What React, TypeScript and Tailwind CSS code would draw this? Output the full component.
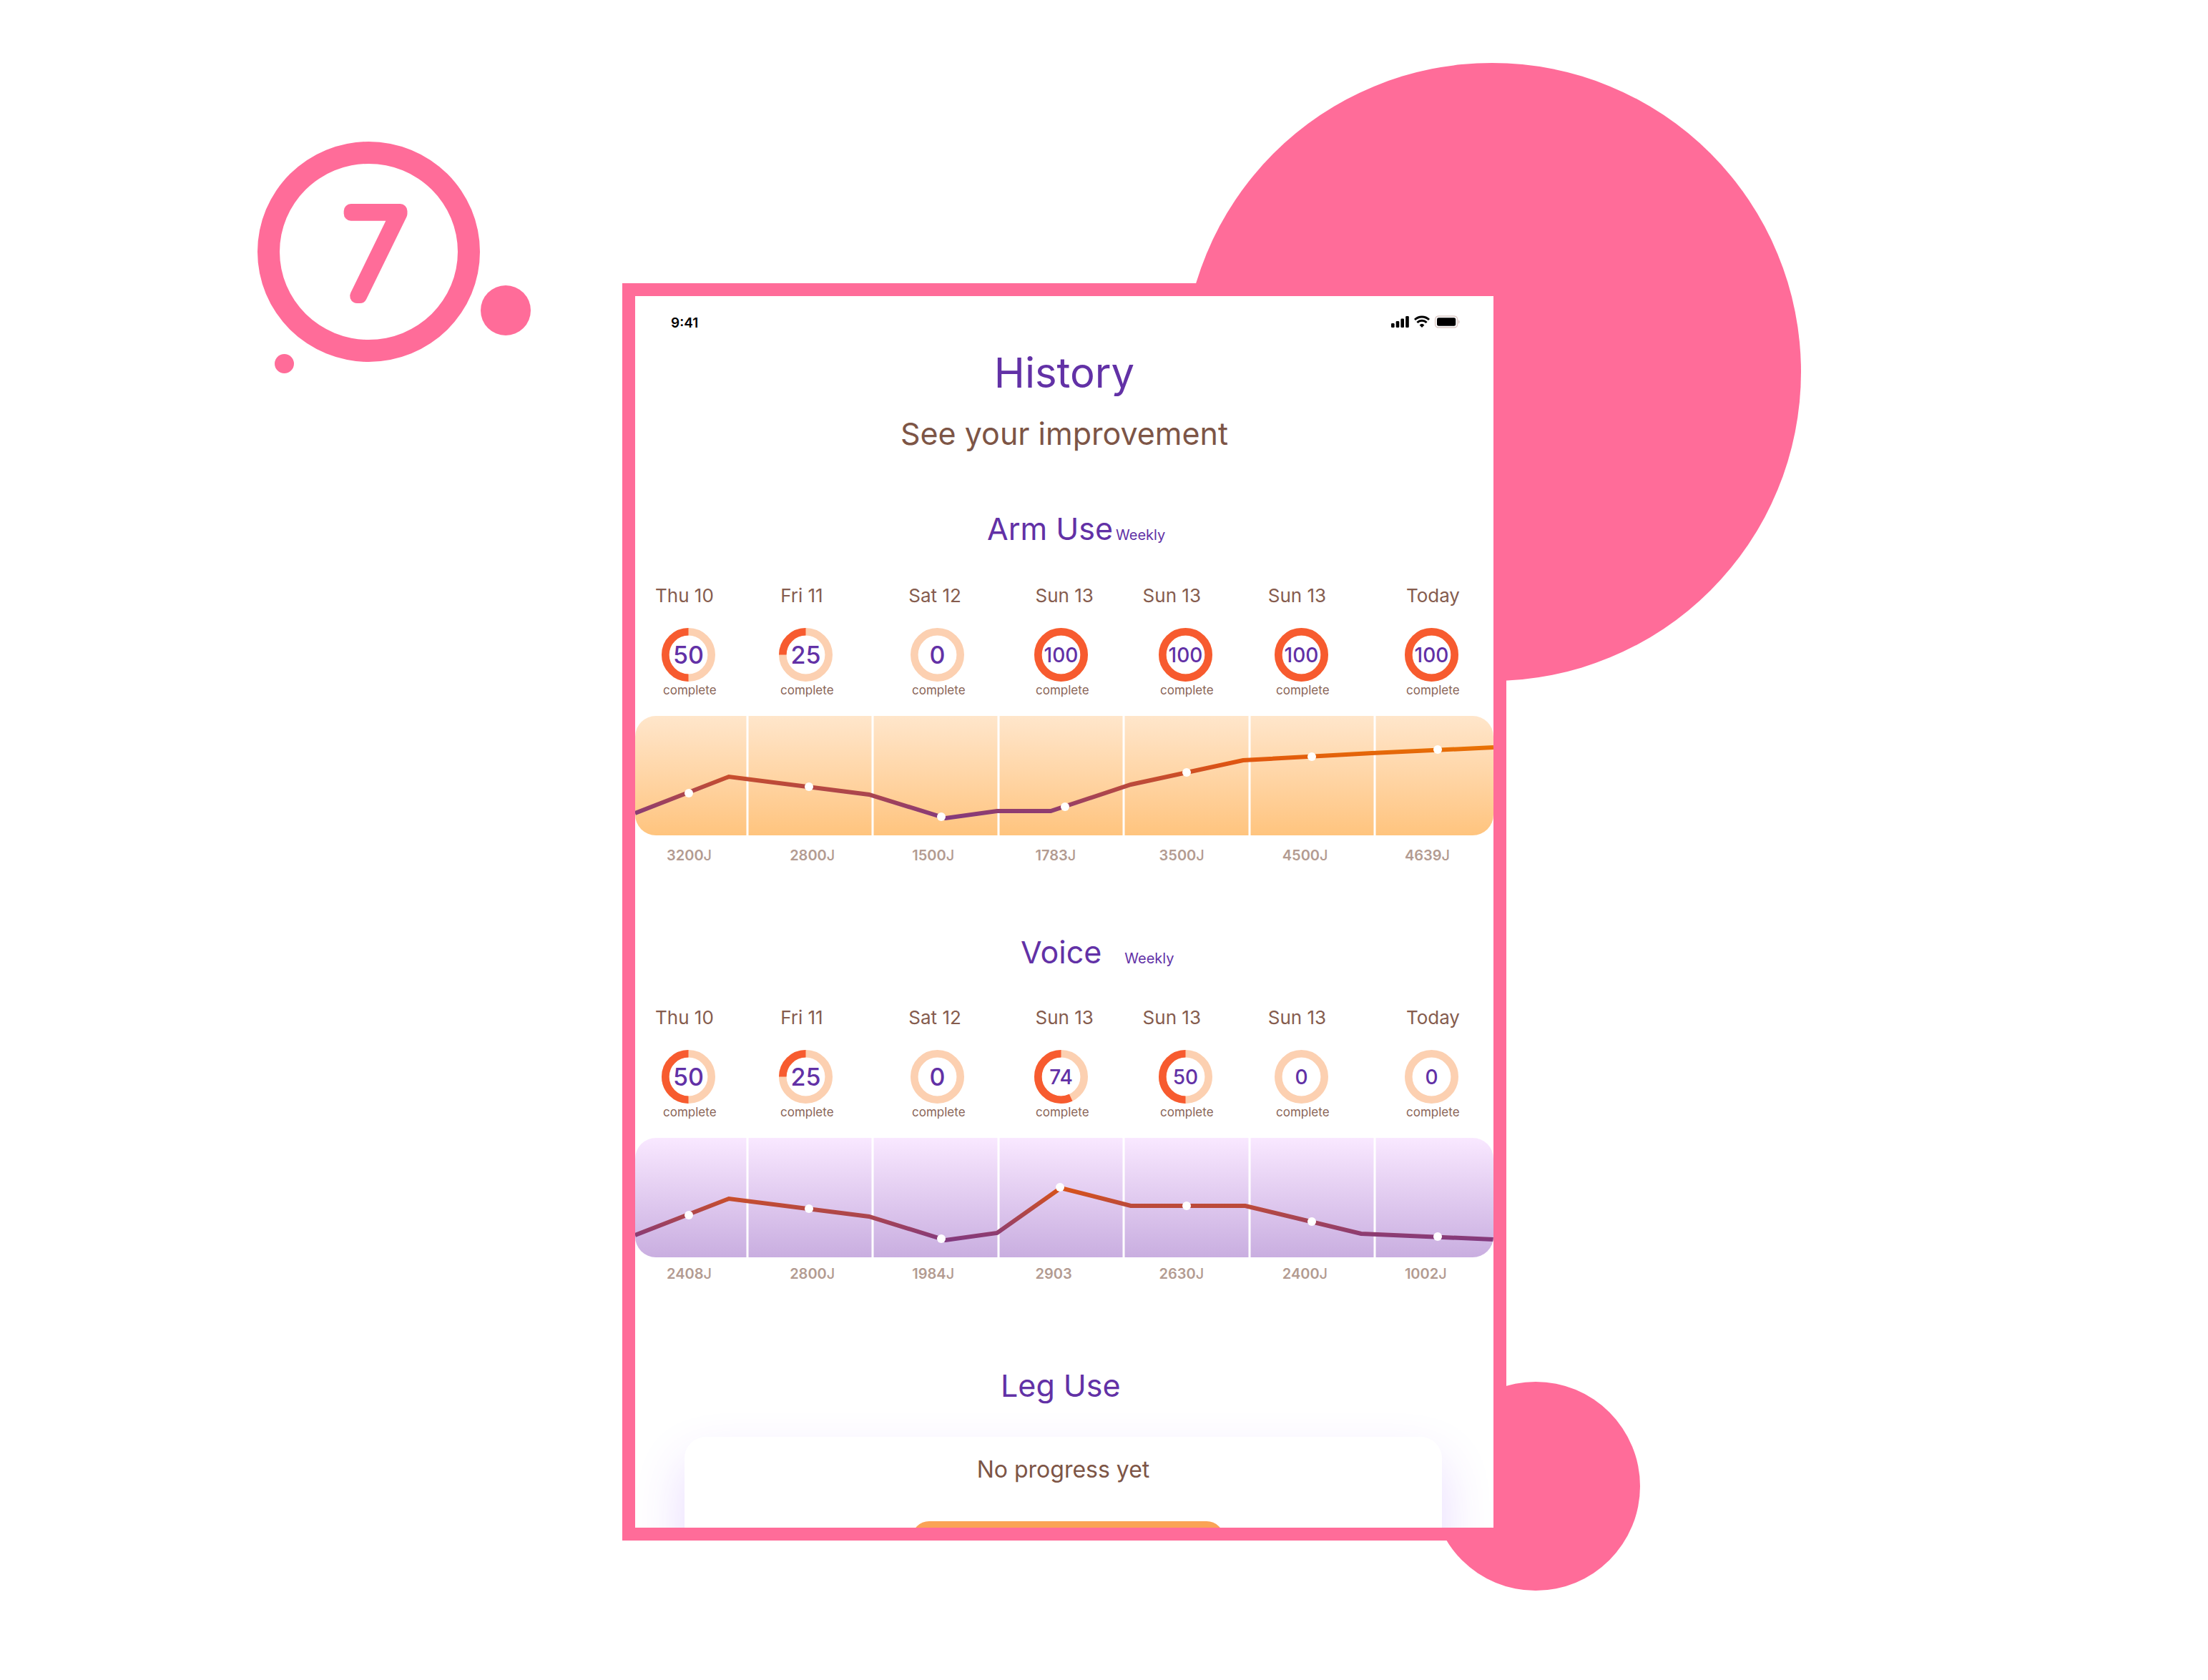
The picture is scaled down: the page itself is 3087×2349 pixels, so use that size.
const DAYS = ["Thu 10", "Fri 11", "Sat 12", "Sun 13", "Sun 13", "Sun 13", "Today"];

type Progress = { value: number; arc?: number };

type Series = {
  id: string;
  title: string;
  titleClass: string;
  progress: Progress[];
  line: string;
  dots: [number, number][];
  chartClass: string;
  energyClass: string;
  energy: string[];
};

const ARM: Series = {
  id: "arm",
  title: "Arm Use",
  titleClass: "mb-[46px] ml-[492px] gap-1",
  progress: [{ value: 50 }, { value: 25 }, { value: 0 }, { value: 100 }, { value: 100 }, { value: 100 }, { value: 100 }],
  line: "0,136 131,85 327,110 434,143 506,133 581,133 693,96 850,62 1030,52 1200,44",
  dots: [[75, 108], [243, 99], [428, 141], [601, 127], [771, 79], [946, 57], [1122, 47]],
  chartClass: "from-[#ffe6cb] to-[#ffc47e]",
  energyClass: "mt-[14px]",
  energy: ["3200J", "2800J", "1500J", "1783J", "3500J", "4500J", "4639J"],
};

const VOICE: Series = {
  id: "voice",
  title: "Voice",
  titleClass: "mb-[44px] ml-[539px] gap-8",
  progress: [{ value: 50 }, { value: 25 }, { value: 0 }, { value: 74, arc: 57 }, { value: 50 }, { value: 0 }, { value: 0 }],
  line: "0,136 131,85 327,110 434,143 506,133 595,70 693,95 853,95 1015,134 1200,142",
  dots: [[75, 108], [243, 99], [428, 141], [594, 69], [771, 95], [946, 117], [1122, 138]],
  chartClass: "from-[#f9e8ff] to-[#c9aee0]",
  energyClass: "mt-[9px]",
  energy: ["2408J", "2800J", "1984J", "2903", "2630J", "2400J", "1002J"],
};

function Ring({ value, arc = value, small }: Progress & { small: boolean }) {
  return (
    <div className="w-[75px]">
      <div className="grid h-[75px] place-items-center">
        <svg viewBox="0 0 75 75" className="col-start-1 row-start-1 size-full" aria-hidden="true">
          <circle cx="37.5" cy="37.5" r="32.2" fill="none" stroke="#fcd0b1" strokeWidth="10.6" />
          <circle
            cx="37.5"
            cy="37.5"
            r="32.2"
            fill="none"
            stroke="#f75b2f"
            strokeWidth="10.6"
            pathLength="100"
            strokeDasharray={`${arc} 100`}
            transform="matrix(0 -1 -1 0 75 75)"
          />
        </svg>
        <span className={`col-start-1 row-start-1 font-medium text-[#6231a6] ${small ? "text-[28px]" : "text-[34px]"}`}>
          {value}
        </span>
      </div>
      <div className="pl-0.5 text-center text-[17px] leading-6 text-[#8a6558]">complete</div>
    </div>
  );
}

function Chart({ series }: { series: Series }) {
  return (
    <div className={`h-[167px] overflow-hidden rounded-[29px] bg-linear-to-b ${series.chartClass}`}>
      <svg viewBox="0 0 1200 167" preserveAspectRatio="none" className="size-full" role="img" aria-label={`${series.title} weekly chart`}>
        <defs>
          <linearGradient id={`${series.id}-line`} gradientUnits="userSpaceOnUse" x1="0" y1="44" x2="0" y2="144">
            <stop offset="0" stopColor="#e87205" />
            <stop offset="0.2" stopColor="#e05510" />
            <stop offset="1" stopColor="#82397f" />
          </linearGradient>
        </defs>
        {[157, 332, 508, 683, 859, 1034].map((x) => (
          <line key={x} x1={x} y1="0" x2={x} y2="167" stroke="#fff" strokeWidth="3" />
        ))}
        <polyline points={series.line} fill="none" stroke={`url(#${series.id}-line)`} strokeWidth="6" />
        {series.dots.map(([x, y]) => (
          <circle key={x} cx={x} cy={y} r="6" fill="#fff" />
        ))}
      </svg>
    </div>
  );
}

function Energy({ value }: { value: string }) {
  const joules = value.endsWith("J");
  return (
    <div className="text-[20px] leading-7 font-semibold text-[#b39b91]">
      {joules ? value.slice(0, -1) : value}
      {joules && <span className="font-medium">J</span>}
    </div>
  );
}

function History({ series }: { series: Series }) {
  return (
    <section>
      <div className={`flex items-baseline text-[#6231a6] ${series.titleClass}`}>
        <h2 className="text-[43px] leading-[60px]">{series.title}</h2>
        <span className="text-[20px]">Weekly</span>
      </div>
      <div className="grid grid-cols-[175fr_179fr_177fr_150fr_175fr_193fr_122fr] pl-[28px] text-[26px] leading-9 whitespace-nowrap text-[#855c4e]">
        {DAYS.map((day, i) => (
          <div key={i}>{day}</div>
        ))}
      </div>
      <div className="mt-[27px] grid grid-cols-[164fr_184fr_173fr_174fr_162fr_182fr_124fr] pl-[37px]">
        {series.progress.map((item, i) => (
          <Ring key={i} {...item} small={i > 2} />
        ))}
      </div>
      <div className="mt-6">
        <Chart series={series} />
      </div>
      <div className={`grid grid-cols-[172fr_171fr_172fr_173fr_172fr_171fr_124fr] pl-[44px] ${series.energyClass}`}>
        {series.energy.map((value, i) => (
          <Energy key={i} value={value} />
        ))}
      </div>
    </section>
  );
}

function StatusBar() {
  return (
    <header className="flex items-start justify-between pt-6 pr-[47px] pl-[50px] text-black">
      <span className="text-[19px] leading-7 font-semibold">9:41</span>
      <svg viewBox="0 0 96 18" className="mt-[3px] h-[18px] w-24" aria-label="Signal, Wi-Fi and battery">
        <rect x="0" y="11" width="4.6" height="6" rx="1.3" />
        <rect x="6.7" y="8" width="4.6" height="9" rx="1.3" />
        <rect x="13.4" y="4.6" width="4.6" height="12.4" rx="1.3" />
        <rect x="20.2" y="1" width="4.6" height="16" rx="1.3" />
        <g fill="none" stroke="#000" strokeWidth="3">
          <path d="M33 6a14.6 14.6 0 0 1 20 0" />
          <path d="M36.4 10a9.6 9.6 0 0 1 13.2 0" />
        </g>
        <path d="M39.6 13.4a5 5 0 0 1 6.8 0L43 17Z" />
        <rect x="61.6" y="1" width="31" height="16" rx="4.5" fill="none" stroke="#dccbc7" strokeWidth="1.5" />
        <rect x="64" y="3.2" width="26.2" height="11.6" rx="2.4" />
        <path d="M94 6.4c2.2.9 2.2 4.3 0 5.2Z" fill="#dccbc7" />
      </svg>
    </header>
  );
}

export default function App() {
  return (
    <div className="relative grid min-h-screen grid-cols-[870fr_1236fr_981fr] items-start overflow-hidden bg-white pt-[396px] pb-[195px] font-['Inter',sans-serif]">
      <div className="absolute top-[198px] left-[360px] grid h-[308px] w-[311px] place-items-center rounded-[50%] border-[31px] border-[#ff6c99]">
        <svg viewBox="0 0 240 240" className="size-[240px] overflow-visible">
          <text
            x="129"
            y="182"
            textAnchor="middle"
            fill="#ff6c99"
            stroke="#ff6c99"
            strokeWidth="20"
            strokeLinejoin="round"
            className="font-['Inter',sans-serif] text-[163px] font-thin"
          >
            7
          </text>
        </svg>
      </div>
      <div className="absolute top-[399px] left-[672px] size-[70px] rounded-full bg-[#ff6c99]" />
      <div className="absolute top-[495px] left-[384px] size-[27px] rounded-full bg-[#ff6c99]" />

      <div className="relative col-start-2">
        <div className="absolute -top-[308px] left-[784px] size-[864px] rounded-full bg-[#ff6c99]" />
        <div className="absolute right-[-187px] bottom-[-70px] size-[292px] rounded-full bg-[#ff6c99]" />
        <main className="relative flex flex-col overflow-hidden border-[18px] border-[#ff6c99] bg-white">
          <StatusBar />
          <h1 className="mt-[15px] text-center text-[58px] leading-[80px] text-[#6231a6]">History</h1>
          <p className="mt-[15px] text-center text-[43px] leading-[60px] text-[#7d5546]">See your improvement</p>
          <div className="mt-[73px]">
            <History series={ARM} />
          </div>
          <div className="mt-[91px]">
            <History series={VOICE} />
          </div>
          <section className="mt-[112px]">
            <h2 className="ml-[511px] text-[43px] leading-[60px] text-[#6231a6]">Leg Use</h2>
            <div className="mt-[42px] mr-[72px] -mb-[175px] ml-[69px] rounded-[30px] bg-white pt-6 pb-[128px] shadow-[0_34px_70px_rgba(125,55,255,0.19)]">
              <p className="text-center text-[32px] leading-[44px] text-[#7d5546]">No progress yet</p>
              <button type="button" aria-label="Start" className="mt-[50px] ml-[318px] block h-[56px] w-[436px] rounded-[24px] bg-[#faa356]" />
            </div>
          </section>
        </main>
      </div>
    </div>
  );
}
